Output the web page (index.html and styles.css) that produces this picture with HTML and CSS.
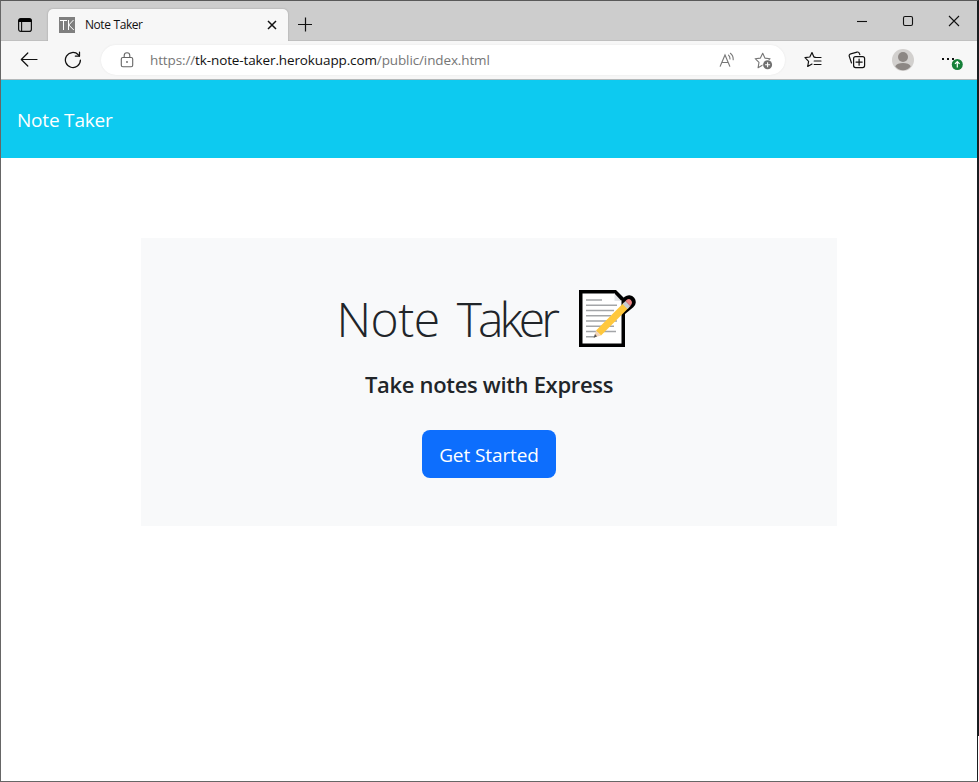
FILE: index.html
```
<!DOCTYPE html>
<html lang="en">
<head>
<meta charset="utf-8">
<title>Note Taker</title>
<link rel="stylesheet" href="styles.css">
</head>
<body>
<div class="window">
  <div class="tabstrip">
    <svg class="tab-actions" width="16" height="16" viewBox="0 0 16 16"><rect x="1.6" y="1.6" width="12.8" height="12.8" rx="2.2" fill="none" stroke="#111" stroke-width="1.2"/><path d="M1.5 5V3.5a2 2 0 0 1 2-2h9a2 2 0 0 1 2 2V5z" fill="#000"/><path d="M4.6 5v9.4" stroke="#111" stroke-width="1.1"/></svg>
    <div class="tab">
      <span class="favicon"><svg width="16" height="16" viewBox="0 0 16 16" fill="none" stroke="#fff" stroke-width="1"><path d="M1 3.5h7M4.5 3.5V13M9.5 3v10M14.5 3l-4.7 5 5 5"/></svg></span>
      <span class="tab-title">Note Taker</span>
      <svg class="tab-close" width="10" height="10" viewBox="0 0 10 10"><path d="M1 1l8 8M9 1L1 9" stroke="#111" stroke-width="1.5"/></svg>
    </div>
    <svg class="new-tab" width="16" height="16" viewBox="0 0 16 16"><path d="M1 8.5h14M8.5 1.5v14" stroke="#111" stroke-width="1.2"/></svg>
    <div class="controls">
      <svg width="12" height="12" viewBox="0 0 12 12"><path d="M1 6.5h10" stroke="#111" stroke-width="1.1"/></svg>
      <svg width="12" height="12" viewBox="0 0 12 12"><rect x="1.5" y="1.5" width="9" height="9" rx="1.5" fill="none" stroke="#111" stroke-width="1.1"/></svg>
      <svg width="12" height="12" viewBox="0 0 12 12"><path d="M1 1l10 10M11 1L1 11" stroke="#111" stroke-width="1.1"/></svg>
    </div>
  </div>
  <div class="toolbar">
    <svg class="back" width="18" height="16" viewBox="0 0 18 16" fill="none" stroke="#111" stroke-width="1.2" stroke-linecap="round" stroke-linejoin="round"><path d="M1.3 7.5H17M7.8 1L1.3 7.5l6.5 6.5"/></svg>
    <svg class="reload" width="18" height="18" viewBox="0 0 18 18" fill="none" stroke="#111" stroke-width="1.25" stroke-linecap="round" stroke-linejoin="round"><path d="M16.4 9A7.5 7.5 0 1 1 14.3 3.8L15.4 5"/><path d="M15.5 1.2V5h-4.2"/></svg>
    <div class="address">
      <svg class="lock" width="14" height="16" viewBox="0 0 14 16" fill="none" stroke="#666" stroke-width="1.1"><rect x="1.3" y="5.5" width="11.4" height="9.3" rx="1.5"/><path d="M4.2 5.5V3.6a2.8 2.8 0 0 1 5.6 0v1.9"/><circle cx="7" cy="10" r=".9" fill="#666" stroke="none"/></svg>
      <span class="url">https://<b>tk-note-taker.herokuapp.com</b>/public/index.html</span>
      <svg class="read" width="17" height="16" viewBox="0 0 17 16" fill="none" stroke="#777" stroke-width="1.1" stroke-linecap="round"><path d="M1.2 14.3L6 3l4.8 11.3M2.8 10.5h6.4M9.5 3.2q1.6 1.4 1.5 3.8M11.4 1.3q3 2.4 2.8 6.5"/></svg>
      <svg class="fav" width="19" height="18" viewBox="0 0 19 18"><path d="M8.7 1.3l2.2 4.8 5.2.6-3.8 3.7.9 5.1-4.5-2.4-4.6 2.6.9-5.3L1.2 6.7l5.2-.6z" fill="none" stroke="#777" stroke-width="1.1" stroke-linejoin="round"/><circle cx="13.6" cy="12.8" r="5.2" fill="#fff"/><circle cx="13.6" cy="12.8" r="4.5" fill="#707070"/><path d="M11.1 12.8h5M13.6 10.3v5" stroke="#fff" stroke-width="1.1"/></svg>
    </div>
    <svg class="favorites" width="18" height="18" viewBox="0 0 18 18" fill="none" stroke="#111" stroke-width="1.2" stroke-linejoin="round" stroke-linecap="round"><path d="M11 6.2L9.9 6 8 1.5 5.8 6 1 6.7l3.6 3.6-.9 5.2L8 13.1M10.7 6.5H17M10.2 10H17M10.2 13.5H17"/></svg>
    <svg class="collections" width="18" height="18" viewBox="0 0 18 18" fill="none" stroke="#111" stroke-width="1.2" stroke-linecap="round"><path d="M3.5 12L1.3 5.4a2 2 0 0 1 1.4-2.6L9 1.1a2 2 0 0 1 2.4 1.4l.4 1.1"/><rect x="5.6" y="5.6" width="11" height="11" rx="2"/><path d="M11.1 8v6.2M8 11.1h6.2"/></svg>
    <svg class="profile" width="22" height="22" viewBox="0 0 22 22"><circle cx="11" cy="11" r="11" fill="#d2d0ce"/><circle cx="11" cy="8" r="5" fill="#8c8784"/><path d="M3.2 17.2q2.1-3.2 7.8-3.2t7.8 3.2A10.8 10.8 0 0 1 11 21.3a10.8 10.8 0 0 1-7.8-4.1z" fill="#8c8784"/></svg>
    <svg class="more" width="22" height="18" viewBox="0 0 22 18"><path d="M1 4h2v2H1zM6 4h2v2H6zM11 4h2v2h-2z" fill="#111"/><circle cx="16.3" cy="10.5" r="5.5" fill="#168039"/><path d="M16.3 13.6V7.7M14 9.8l2.3-2.3 2.3 2.3" fill="none" stroke="#fff" stroke-width="1.2"/></svg>
  </div>
  <div class="page">
    <header class="navbar"><span class="brand">Note Taker</span></header>
    <main class="hero">
      <h1><span class="title">Note <span class="tight">Taker</span></span><svg class="memo" width="57" height="57" viewBox="0 0 57 57"><path d="M0 0h37L46 9v48H0z"/><path d="M39 21L50 12" stroke="#000" stroke-width="13.5" stroke-linecap="round"/><path d="M3.5 3.5H36v7h6.5v43h-39z" fill="#fff"/><path d="M35.5 3.5v7.5h7z" fill="#e3e5e8"/><path d="M7 10h16M7 15.2h31M7 20.5h28M7 25.7h25M7 31h31M7 36.2h28M7 41.5h30M7 46.7h9" stroke="#a3a5a8" stroke-width="1.6"/><path d="M17 40.5L45 12.5l5 5-28 28z" fill="#ffc83d"/><path d="M17 40.5l5 5-7 2z" fill="#f3d4b8"/><path d="M16 44l2 2.4-3.4 1.4z" fill="#555"/><path d="M43.5 14l3-3 5 5-3 3z" fill="#c9ccd0"/><path d="M46.5 11l1.6-1.5q2-1.2 3.8.6t.8 3.9L51.300 16z" fill="#ee8584"/></svg></h1>
      <h4>Take notes with Express</h4>
      <a class="btn">Get Started</a>
    </main>
  </div>
</div>
<div class="edge"></div>
</body>
</html>
```
FILE: styles.css
```
* { box-sizing: border-box; }
body { margin: 0; font-family: "Open Sans", "Noto Sans", sans-serif; color: #212529; }
svg { display: block; flex: none; }
.window { width: 979px; height: 782px; overflow: hidden; border: 1px solid #666; border-top-color: #595959; border-right: 2px solid #1b1d20; background: #fff; display: flex; flex-direction: column; }
.edge { position: absolute; left: 978px; top: 736px; width: 1px; height: 46px; background: #fff; }
.tabstrip { height: 40px; flex: none; background: #cdcdcd; border-bottom: 1px solid #c0c0c0; display: flex; padding-top: 8px; }
.tab-actions { margin: 8px 0 0 16px; }
.tab { width: 240px; height: 32px; margin-left: 15px; background: #f7f7f7; border-radius: 5px 5px 0 0; box-shadow: 0 0 2px #999; clip-path: inset(-3px -3px 0 -3px); display: flex; align-items: center; padding: 0 11px; }
.favicon { width: 16px; height: 16px; background: #7f7f7f; }
.tab-title { font-size: 12px; line-height: 16px; margin-left: 10px; color: #111; letter-spacing: -.45px; word-spacing: .4px; white-space: nowrap; }
.tab-close { margin-left: auto; }
.new-tab { margin: 7px 0 0 9px; }
.controls { display: flex; gap: 34px; margin: 6px 17px 0 auto; }
.toolbar { height: 39px; flex: none; background: #f7f7f7; border-bottom: 1px solid #b4b9ba; display: flex; align-items: center; }
.back { margin-left: 19px; }
.reload { margin-left: 26px; }
.address { margin-left: 19px; width: 684px; height: 30px; border-radius: 15px; background: #fff; box-shadow: 0 0 2px #e4e4e4; display: flex; align-items: center; }
.lock { margin-left: 19px; margin-top: -1px; }
.url { margin-left: 16px; font-size: 13.5px; line-height: 18px; letter-spacing: -.12px; color: #767676; white-space: nowrap; }
.url b { font-weight: 400; color: #111; }
.read { margin-left: auto; }
.fav { margin: 1px 12px 0 18px; }
.favorites { margin-left: 19px; }
.collections { margin-left: 26px; }
.profile { margin-left: 26px; }
.more { margin: 6px 0 0 27px; }
.navbar { height: 78px; background: #0dcaf0; padding: 0 16px; display: flex; align-items: center; }
.brand { color: #fff; font-size: 19px; line-height: 30px; letter-spacing: -.2px; margin-top: 1px; }
.hero { width: 696px; height: 288px; margin: 80px auto 0 140px; background: #f8f9fa; display: flex; flex-direction: column; align-items: center; padding-top: 52px; }
h1 { margin: 0; height: 58px; display: flex; }
.title { font-size: 48px; font-weight: 300; line-height: 58px; letter-spacing: -.5px; word-spacing: 5px; width: 242px; margin-left: -1px; white-space: nowrap; }
.tight { letter-spacing: -3.9px; }
.memo { margin-right: 5px; }
h4 { margin: 22px 0 0; font-size: 22px; line-height: 29px; font-weight: 600; letter-spacing: -.32px; }
.btn { margin-top: 31px; width: 134px; height: 48px; border-radius: 8px; background: #0d6efd; color: #fff; font-size: 19px; line-height: 50px; letter-spacing: -.1px; text-align: center; white-space: nowrap; }
```
